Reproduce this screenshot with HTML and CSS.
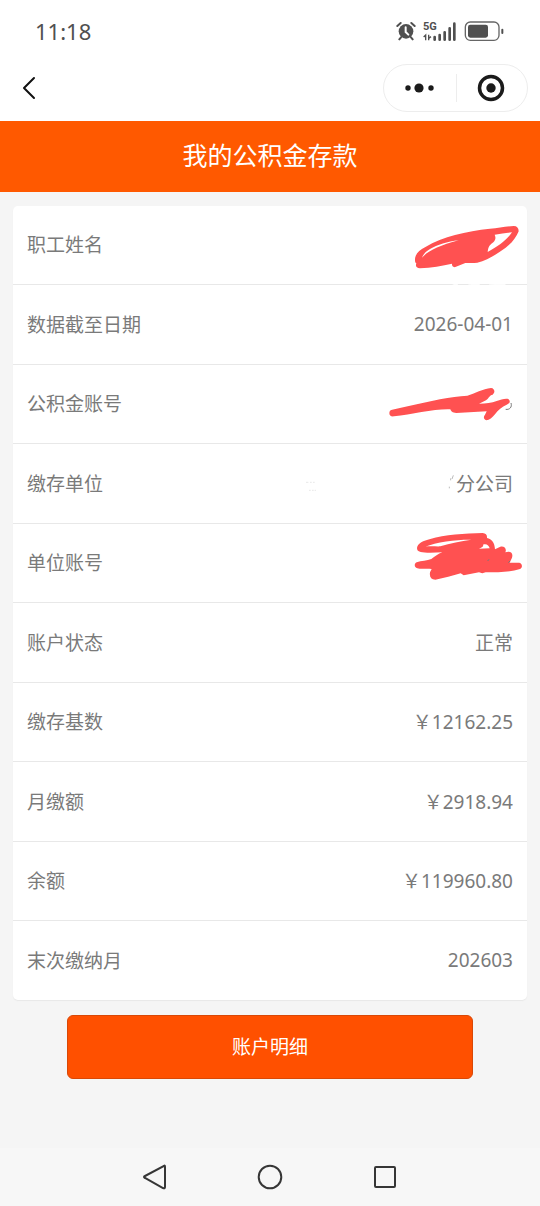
FILE: index.html
```html
<!DOCTYPE html>
<html lang="zh-CN">
<head>
<meta charset="utf-8">
<meta name="viewport" content="width=device-width, initial-scale=1">
<title>我的公积金存款</title>
<link rel="stylesheet" href="styles.css">
</head>
<body>
<header class="status">
  <time class="clock">11:18</time>
  <div class="indicators">
    <svg width="20" height="20" viewBox="0 0 60 60" aria-label="闹钟">
      <circle cx="30" cy="31" r="22" fill="#505050"/>
      <path d="M4 15 14 6M46 6 56 15M15 49 10 55M45 49 50 55" stroke="#505050" stroke-width="6" stroke-linecap="round"/>
      <path d="M29 19V33L37 41" fill="none" stroke="#fff" stroke-width="6" stroke-linecap="round"/>
    </svg>
    <div class="network">
      <span class="generation">5G</span>
      <svg width="34" height="20" viewBox="0 0 102 60" aria-label="信号">
        <path d="M35 56V48M50 56V42M65 56V34M80 56V22M94 56V8" stroke="#505050" stroke-width="8" stroke-linecap="round"/>
        <path d="M2 48 8 42V58M17 41V58M17 52 24 47" fill="none" stroke="#505050" stroke-width="4"/>
      </svg>
    </div>
    <svg width="40" height="20" viewBox="0 0 120 60" aria-label="电池">
      <rect x="4" y="3" width="101" height="55" rx="15" fill="none" stroke="#666" stroke-width="4"/>
      <rect x="12" y="11" width="60" height="39" rx="7" fill="#505050"/>
      <path d="M115 26V36" stroke="#505050" stroke-width="6" stroke-linecap="round"/>
    </svg>
  </div>
</header>
<nav class="topbar">
  <button class="icon-button" aria-label="返回">
    <svg width="14" height="24" viewBox="0 0 14 24"><path d="M12 2 2 12 12 22" fill="none" stroke="#111" stroke-width="2" stroke-linecap="round" stroke-linejoin="round"/></svg>
  </button>
  <div class="capsule">
    <button class="capsule-button" aria-label="更多">
      <svg width="30" height="12" viewBox="0 0 30 12" fill="#1b1b1b"><circle cx="3" cy="6" r="2.7"/><circle cx="14" cy="6" r="4.6"/><circle cx="26" cy="6" r="2.7"/></svg>
    </button>
    <button class="capsule-button" aria-label="关闭">
      <svg width="28" height="28" viewBox="0 0 28 28"><circle cx="14" cy="14" r="11.5" fill="none" stroke="#1b1b1b" stroke-width="3.5"/><circle cx="14" cy="14" r="4.7" fill="#1b1b1b"/></svg>
    </button>
  </div>
</nav>
<h1 class="title">我的公积金存款</h1>
<main class="content">
  <dl class="card">
    <div class="row"><dt>职工姓名</dt><dd>
      <svg class="mark" width="147" height="79" viewBox="0 18 441 237">
        <path fill="#ff5151" fill-rule="evenodd" d="M105 179C105 162 118 151 135 142C163 124 194 113 225 105C260 96 294 89 330 86C355 84 377 79 401 78C411 78 416 84 416 94C409 112 396 129 377 143C349 163 322 182 292 188C280 190 268 189 256 189L226 201C219 203 215 197 216 191C187 198 154 203 120 205C109 204 106 199 109 190C105 187 105 184 105 179ZM126 173C130 162 139 153 150 147C172 135 202 124 236 121C178 137 146 151 126 173ZM344 104C348 113 347 120 340 127C325 138 325 144 323 156C355 139 382 119 396 97C379 98 362 101 344 104Z"/>
        <path d="M218 253H234L230 257ZM265 253H300L290 258ZM327 253H377L369 258Z" fill="#fff" stroke="#fff"/>
      </svg>
    </dd></div>
    <div class="row"><dt>数据截至日期</dt><dd>2026-04-01</dd></div>
    <div class="row"><dt>公积金账号</dt><dd>
      <svg class="mark" width="147" height="79" viewBox="0 -15 441 237">
        <path d="M393 99C397 111 389 120 377 118" fill="none" stroke="#777" stroke-width="3"/>
        <path fill="#ff5151" d="M28 129C28 122 33 119 43 118C87 109 133 97 180 88C211 82 237 78 262 77C284 71 309 56 333 54C345 55 346 68 338 74C328 76 327 84 318 91L297 101C318 101 335 99 350 93C362 90 375 84 385 87C393 94 389 101 380 104C366 110 354 120 345 133C337 143 328 151 319 151C310 147 310 139 315 134L320 124L229 129C217 129 213 123 211 118C164 116 97 133 42 139C32 140 28 136 28 129Z"/>
      </svg>
    </dd></div>
    <div class="row"><dt>缴存单位</dt><dd>分公司
      <svg class="mark" width="237" height="80" viewBox="0 -48 711 240">
        <path d="M48 67H55M60 67H65M69 67H74M57 91H62M66 91H71M74 91H78" stroke="#ddd" stroke-width="2"/>
        <path d="M482 55V61M490 46 486 57M478 80V85" stroke="#bbb" stroke-width="3"/>
      </svg>
    </dd></div>
    <div class="row"><dt>单位账号</dt><dd>
      <svg class="mark" width="147" height="79" viewBox="0 12 441 237">
        <path fill="#ff5151" fill-rule="evenodd" d="M111 84C113 69 130 62 151 57C193 44 255 40 308 39C318 40 322 45 321 54C335 58 344 67 345 88L361 80C373 77 381 87 376 97C393 91 400 101 396 113L389 128H418C428 131 428 143 420 147C392 156 355 157 317 157L307 160L297 157L251 166L242 160C218 166 192 175 166 179C153 178 148 171 150 157L155 147C139 145 123 148 112 145C102 142 102 131 110 127C124 122 141 122 154 117C165 109 174 102 187 97C163 98 135 99 122 96C113 93 111 90 111 84ZM136 80C150 77 169 80 181 79C211 69 242 64 274 59C237 58 168 65 136 80ZM297 86L329 85C327 76 319 70 309 74C312 79 304 83 297 86Z"/>
        <path d="M323 123 327 118M385 128 390 123" stroke="#777" stroke-width="3"/>
      </svg>
    </dd></div>
    <div class="row"><dt>账户状态</dt><dd>正常</dd></div>
    <div class="row"><dt>缴存基数</dt><dd>￥12162.25</dd></div>
    <div class="row"><dt>月缴额</dt><dd>￥2918.94</dd></div>
    <div class="row"><dt>余额</dt><dd>￥119960.80</dd></div>
    <div class="row"><dt>末次缴纳月</dt><dd>202603</dd></div>
  </dl>
  <button class="detail">账户明细</button>
</main>
<nav class="system">
  <button class="icon-button" aria-label="后退"><svg width="26" height="26" viewBox="0 0 26 26"><path d="M22 2Q23 1 23 3V23Q23 25 21 24L3 14Q1 13 3 12Z" fill="none" stroke="#363636" stroke-width="2"/></svg></button>
  <button class="icon-button" aria-label="主页"><svg width="26" height="26" viewBox="0 0 26 26"><circle cx="13" cy="13" r="11.3" fill="none" stroke="#363636" stroke-width="2"/></svg></button>
  <button class="icon-button" aria-label="最近任务"><svg width="26" height="26" viewBox="0 0 26 26"><rect x="3" y="3" width="20" height="20" rx="1" fill="none" stroke="#363636" stroke-width="2"/></svg></button>
</nav>
</body>
</html>
```
FILE: styles.css
```css
* {
  box-sizing: border-box;
}

body {
  margin: 0;
  min-height: 100vh;
  display: flex;
  flex-direction: column;
  background: #f5f5f5;
  color: #7a7a7a;
  font-family: "Noto Sans", "Noto Sans CJK SC", sans-serif;
  font-size: 19px;
}

button {
  padding: 0;
  border: 0;
  background: none;
  font: inherit;
  cursor: pointer;
}

svg {
  display: block;
}

.status {
  display: flex;
  align-items: center;
  justify-content: space-between;
  height: 56px;
  padding: 6px 36px 0 35px;
  background: #fff;
}

.clock {
  color: #505050;
  font-size: 22px;
}

.indicators {
  display: flex;
  align-items: center;
  gap: 7px;
}

.network {
  position: relative;
}

.generation {
  position: absolute;
  top: 0;
  left: 0;
  color: #505050;
  font: bold 11px/12px Roboto, sans-serif;
}

.topbar {
  display: flex;
  align-items: center;
  justify-content: space-between;
  height: 65px;
  padding: 0 12px 2px 22px;
  background: #fff;
}

.icon-button {
  display: grid;
  place-items: center;
}

.capsule {
  display: grid;
  grid-template-columns: 1fr 1fr;
  width: 145px;
  height: 48px;
  border: 1px solid #ededed;
  border-radius: 24px;
}

.capsule-button {
  position: relative;
  display: grid;
  place-items: center;
}

.capsule-button + .capsule-button::before {
  content: "";
  position: absolute;
  left: 0;
  top: 9px;
  bottom: 9px;
  border-left: 1px solid #ededed;
}

.title {
  margin: 0;
  padding-bottom: 2px;
  background: #ff5900;
  color: #fff;
  font-size: 25px;
  font-weight: 400;
  line-height: 69px;
  text-align: center;
}

.content {
  flex: 1;
  padding: 14px 13px;
}

.card {
  margin: 0;
  border-radius: 5px;
  background: #fff;
  box-shadow: 0 1px 1px #e8e8e8;
}

.row {
  position: relative;
  display: flex;
  align-items: center;
  justify-content: space-between;
  min-height: 79px;
  padding: 0 14px 2px;
  border-bottom: 1px solid #e8e8e8;
}

.row:nth-child(even) {
  min-height: 80px;
}

.row:last-child {
  min-height: 79px;
  border-bottom: 0;
}

.row dd {
  margin: 0;
}

.mark {
  position: absolute;
  top: 0;
  right: 0;
  overflow: visible;
}

.detail {
  display: block;
  width: 79%;
  height: 64px;
  margin: 15px auto 0;
  padding-bottom: 2px;
  border: 1px solid #d94807;
  border-radius: 6px;
  background: #ff5000;
  color: #fff;
}

.system {
  display: grid;
  grid-template-columns: repeat(3, 26px);
  justify-content: center;
  align-items: center;
  gap: 89px;
  height: 58px;
  background: #f7f7f7;
}
```
